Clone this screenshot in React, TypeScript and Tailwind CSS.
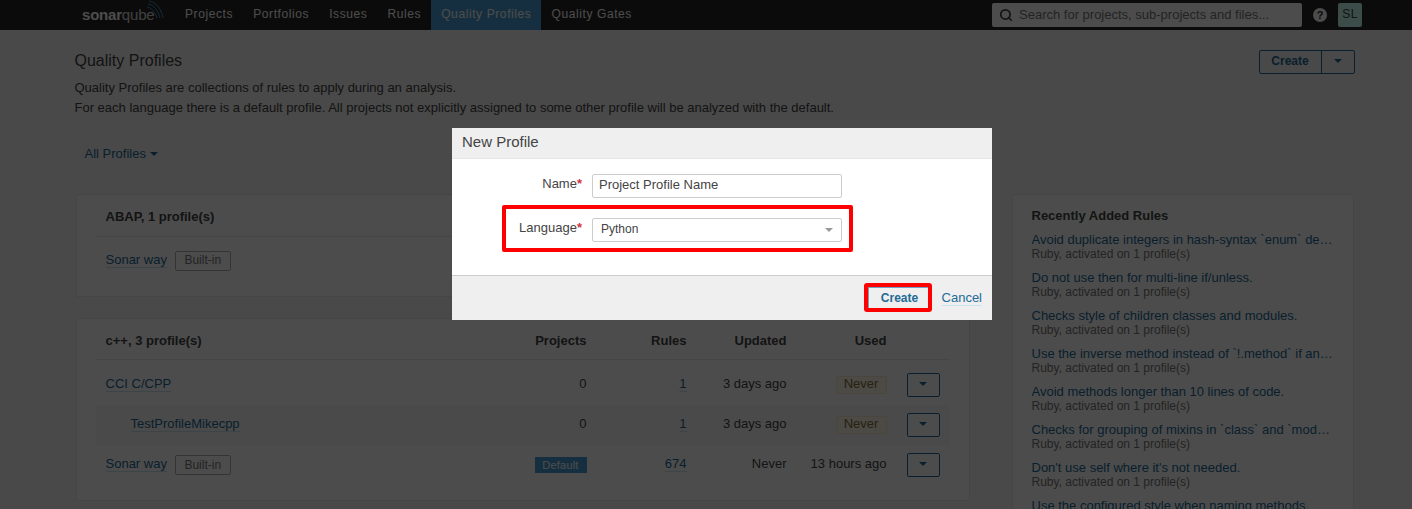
import { Search } from 'lucide-react'

const navItems = ['Projects', 'Portfolios', 'Issues', 'Rules', 'Quality Profiles', 'Quality Gates']

const recentRules = [
  'Avoid duplicate integers in hash-syntax `enum` declarations and definitions.',
  'Do not use then for multi-line if/unless.',
  'Checks style of children classes and modules.',
  'Use the inverse method instead of `!.method` if an inverse method is defined.',
  'Avoid methods longer than 10 lines of code.',
  'Checks for grouping of mixins in `class` and `module` bodies of the code.',
  "Don't use self where it's not needed.",
  'Use the configured style when naming methods.',
]

function Caret({ className }: { className: string }) {
  return (
    <svg width="8" height="4" viewBox="0 0 8 4" className={className}>
      <path d="M0 0h8L4 4z" fill="currentColor" />
    </svg>
  )
}

function ProfileLink({ children }: { children: React.ReactNode }) {
  return <a className="text-[#236a97] border-b border-[#cae3f2] leading-[15px]">{children}</a>
}

function BuiltIn() {
  return <span className="ml-2 h-5 px-[8.5px] pb-px flex items-center border border-[#b0b0b0] rounded-[2px] text-[12px] text-[#777] bg-white">Built-in</span>
}

function Never() {
  return <span className="w-[51px] h-[18px] pb-[3px] flex items-center justify-center rounded-[2px] bg-[#fcf8e3] border border-[#faebcc] text-[#8a6d3b]">Never</span>
}

function RowMenu() {
  return (
    <div className="flex justify-end pr-[10px]">
      <button className="w-[33px] h-6 flex items-center justify-center border border-[#236a97] rounded-[2px] bg-white text-[#236a97]">
        <Caret className="mb-[2px]" />
      </button>
    </div>
  )
}

const rowClass = 'grid grid-cols-[1fr_100px_100px_100px_100px_63px] items-center h-10'
const cellClass = 'text-right pb-[2px]'

export default function App() {
  return (
    <div className="relative h-screen overflow-hidden bg-[#f3f3f3] text-[13px] text-[#444]" style={{ fontFamily: '"Liberation Sans", Arial, sans-serif' }}>
      <nav className="h-[30px] bg-[#262626] pl-[82px] pr-[50px] flex items-center">
        <div className="relative w-[93px] flex items-center text-white text-[15px] leading-none pb-px">
          <span className="font-bold tracking-[-0.2px]">sonar</span>
          <span className="font-light tracking-[-0.2px] opacity-80">qube</span>
          <svg width="18" height="20" viewBox="0 0 18 20" fill="none" stroke="#4b9fd5" strokeWidth="0.9" className="absolute left-[65px] top-[-7px]">
            <path d="M2 1c7 1 12 7 14 17" />
            <path d="M1 4c6 1 10 6 12 14" />
            <path d="M0 7c5 1 8 5 10 11" />
          </svg>
        </div>
        <div className="flex h-full text-[12px] tracking-[0.6px] text-white">
          {navItems.map((item) => (
            <a key={item} className={'h-full px-[10px] flex items-center pb-[2px] ' + (item === 'Quality Profiles' ? 'bg-[#4b9fd5]' : '')}>
              {item}
            </a>
          ))}
        </div>
        <div className="ml-auto w-[310px] h-6 bg-white rounded-[2px] flex items-center pl-[7px] text-[#777]">
          <Search size={14} strokeWidth={3} className="text-[#444]" />
          <span className="ml-[6px]">Search for projects, sub-projects and files...</span>
        </div>
        <div className="ml-[11px] w-[14px] h-[14px] rounded-full bg-white text-[#262626] font-bold text-[11px] flex items-center justify-center">?</div>
        <div className="ml-[11px] w-6 h-6 rounded-[2px] bg-[#c9fff2] text-[#444] text-[12px] tracking-[0.5px] flex items-center justify-center pb-[2px]">SL</div>
      </nav>

      <main className="ml-[74.5px] w-[1280px]">
        <header className="flex justify-between pt-5">
          <div>
            <h1 className="text-[16px] leading-[20px] mt-px">Quality Profiles</h1>
            <p className="mt-[7px] leading-[20px]">
              Quality Profiles are collections of rules to apply during an analysis.
              <br />
              For each language there is a default profile. All projects not explicitly assigned to some other profile will be analyzed with the default.
            </p>
          </div>
          <div className="flex h-6 border border-[#236a97] rounded-[2px] text-[#236a97] text-[12px] font-bold">
            <span className="w-[62px] flex items-center justify-center border-r border-[#236a97] pb-[3px]">Create</span>
            <span className="w-[32px] flex items-center justify-center"><Caret className="mb-[2px]" /></span>
          </div>
        </header>

        <a className="mt-[26px] ml-[10px] h-5 flex items-center text-[#236a97]">
          All Profiles
          <Caret className="ml-1" />
        </a>

        <div className="mt-[30px] flex items-start">
          <div className="ml-px w-[894px]">
            <section className="h-[103px] bg-white border border-[#e6e6e6] px-[19px]">
              <div className={rowClass + ' !h-[42px] border-b border-[#e6e6e6] font-bold pt-[2px]'}>
                <span className="pl-[10px]">ABAP, 1 profile(s)</span>
              </div>
              <div className="h-[47px] pl-[10px] flex items-center">
                <span className="mb-[2px]"><ProfileLink>Sonar way</ProfileLink></span>
                <BuiltIn />
              </div>
            </section>

            <section className="mt-[21px] h-[183px] bg-white border border-[#e6e6e6] px-[19px]">
              <div className={rowClass + ' !h-[41px] border-b border-[#e6e6e6] font-bold pt-1'}>
                <span className="pl-[10px]">c++, 3 profile(s)</span>
                <span className="text-right">Projects</span>
                <span className="text-right">Rules</span>
                <span className="text-right">Updated</span>
                <span className="text-right">Used</span>
              </div>
              <div className={rowClass + ' mt-[5px]'}>
                <span className="pl-[10px] pb-[2px]"><ProfileLink>CCI C/CPP</ProfileLink></span>
                <span className={cellClass}>0</span>
                <span className={cellClass}><ProfileLink>1</ProfileLink></span>
                <span className={cellClass}>3 days ago</span>
                <div className="flex justify-end"><Never /></div>
                <RowMenu />
              </div>
              <div className={rowClass + ' bg-[#f8f8f8]'}>
                <span className="pl-[35px] pb-[2px]"><ProfileLink>TestProfileMikecpp</ProfileLink></span>
                <span className={cellClass}>0</span>
                <span className={cellClass}><ProfileLink>1</ProfileLink></span>
                <span className={cellClass}>3 days ago</span>
                <div className="flex justify-end"><Never /></div>
                <RowMenu />
              </div>
              <div className={rowClass}>
                <div className="pl-[10px] flex items-center">
                  <span className="mb-[2px]"><ProfileLink>Sonar way</ProfileLink></span>
                  <BuiltIn />
                </div>
                <div className="flex justify-end">
                  <span className="w-[52px] h-4 flex items-center justify-center bg-[#4b9fd5] text-white text-[11px] tracking-[0.2px]">Default</span>
                </div>
                <span className={cellClass}><ProfileLink>674</ProfileLink></span>
                <span className={cellClass}>Never</span>
                <span className={cellClass}>13 hours ago</span>
                <RowMenu />
              </div>
            </section>
          </div>

          <aside className="ml-[42px] w-[342px] h-[400px] bg-white border border-[#e6e6e6] pl-[19px] pr-[17px] pt-[11px]">
            <h2 className="font-bold leading-[20px]">Recently Added Rules</h2>
            <ul className="mt-[6px]">
              {recentRules.map((rule) => (
                <li key={rule} className="h-[38px]">
                  <a className="block truncate text-[#236a97] leading-[15px]">{rule}</a>
                  <p className="text-[12px] text-[#777] leading-[14px]">Ruby, activated on 1 profile(s)</p>
                </li>
              ))}
            </ul>
          </aside>
        </div>
      </main>

      <div className="absolute inset-0 bg-black/70" />

      <div className="absolute left-[452px] top-[128px] w-[540px] h-[192px] bg-white flex flex-col">
        <div className="h-[31px] bg-[#efefef] border-b border-[#e6e6e6] pl-[10px] pb-[2px] flex items-center text-[15px]">New Profile</div>
        <div className="flex-1 pt-[15px]">
          <div className="flex items-center h-6">
            <label className="w-[130px] text-right pb-[4px]">Name<span className="font-bold text-[#d4333f]">*</span></label>
            <div className="ml-[10px] w-[250px] h-6 border border-[#cdcdcd] rounded-[2px] pl-[6px] pb-[2px] flex items-center">Project Profile Name</div>
          </div>
          <div className="mt-[7px] ml-[50px] w-[351px] h-[47px] border-4 border-[#ff0000] rounded-[2px] flex items-center">
            <label className="w-[76px] text-right pb-px">Language<span className="font-bold text-[#d4333f]">*</span></label>
            <div className="ml-[10px] mt-[3px] w-[250px] h-6 border border-[#cdcdcd] rounded-[2px] pl-2 pr-2 pb-[2px] flex items-center justify-between text-[12px]">
              Python
              <Caret className="text-[#999] mt-[2px]" />
            </div>
          </div>
        </div>
        <div className="h-[45px] bg-[#efefef] border-t border-[#cdcdcd] flex items-center justify-end pr-[10px] pb-px">
          <button className="w-[68px] h-[29px] border-4 border-[#ff0000] rounded-[3px]">
            <span className="w-full h-full pl-[3px] flex items-center justify-center border-l border-t border-[#236a97]/60 text-[12px] font-bold text-[#236a97]">Create</span>
          </button>
          <a className="ml-[10px] text-[#236a97] border-b border-[#cae3f2] leading-[15px]">Cancel</a>
        </div>
      </div>
    </div>
  )
}
